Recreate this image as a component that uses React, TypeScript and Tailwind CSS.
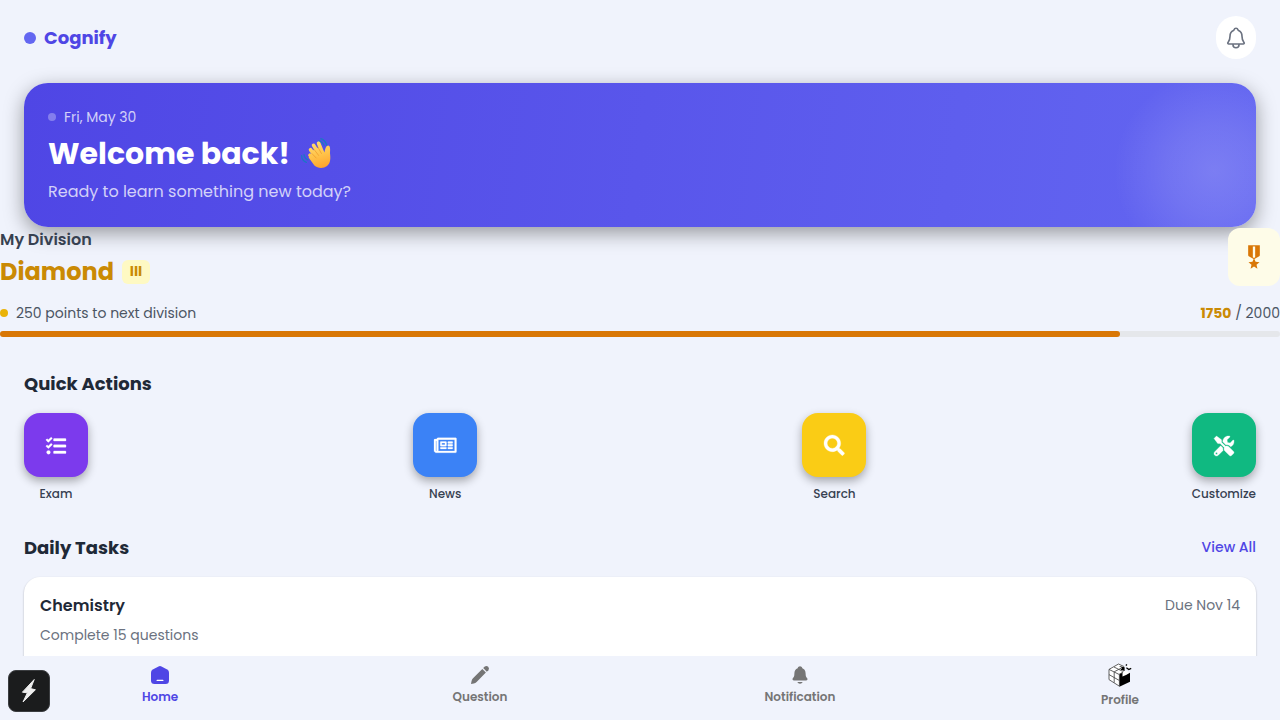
import type { ReactNode } from "react";
import { IoNotificationsOutline, IoNotifications } from "react-icons/io5";
import { MdMilitaryTech } from "react-icons/md";
import { FaTasks, FaRegNewspaper, FaSearch, FaTools } from "react-icons/fa";

function Action({ label, tile, children }: { label: string; tile: string; children: ReactNode }) {
  return (
    <div className="flex min-w-16 flex-col items-center">
      <div
        className={`flex h-16 w-16 items-center justify-center rounded-2xl pt-px text-white shadow-[0_4px_10px_rgba(0,0,0,0.32)] [&_svg]:overflow-visible ${tile}`}
      >
        {children}
      </div>
      <span className="mt-2 whitespace-nowrap text-[12px] leading-[18px] font-medium text-[#374151]">{label}</span>
    </div>
  );
}

function WaveHand() {
  return (
    <svg width="32" height="32" viewBox="0 0 32 32" className="overflow-visible">
      <defs>
        <linearGradient id="hand" gradientUnits="userSpaceOnUse" x1="12" y1="3" x2="20" y2="30">
          <stop offset="0" stopColor="#ffdc73" />
          <stop offset=".55" stopColor="#ffc34a" />
          <stop offset="1" stopColor="#ffa52e" />
        </linearGradient>
      </defs>
      <g fill="none" stroke="url(#hand)" strokeLinecap="round" strokeWidth="3.7">
        <path d="M10 17.2L16 23" />
        <path d="M10.6 11.8L17 20" />
        <path d="M13.6 7.4L20 18" />
        <path d="M18.6 5.2L23 16" />
      </g>
      <path
        d="M10.5 17L13.5 12L20 9L24.4 14.4C25.2 12.4 25.2 8.4 28 7.6C30.6 7.6 30.2 12 30 15.5C30.6 20 30.8 25 27 28C23.4 30.8 17.6 30.4 14.4 27.6L8.6 19.4Z"
        fill="url(#hand)"
      />
      <path d="M12 15.6L16.2 20M14.2 11.6L18.6 17.4M17.8 9L21.4 15.4" stroke="#ec9626" strokeWidth=".7" strokeLinecap="round" fill="none" />
      <path
        d="M20.8 .6Q25.4 2.2 26.8 7M19 2.6Q22.6 3.8 24 7.2M1.6 17.6Q1.6 22.6 6.4 24.4M4 16.6Q4.4 20.4 8 21.8"
        stroke="#1b78c4"
        strokeWidth="1.3"
        strokeLinecap="round"
        fill="none"
      />
    </svg>
  );
}

function HomeIcon() {
  return (
    <svg width="20" height="20" viewBox="0 0 20 20">
      <path d="M8.5 1.5Q10 .7 11.5 1.5L17.2 4.6Q19 5.6 19 7.5V15.5Q19 19 15.5 19H4.5Q1 19 1 15.5V7.5Q1 5.6 2.8 4.6Z" fill="currentColor" />
      <path d="M7.2 15.4H12.8" stroke="#fff" strokeWidth="1.4" strokeLinecap="round" />
    </svg>
  );
}

function PencilIcon() {
  return (
    <svg width="20" height="20" viewBox="0 0 20 20" fill="currentColor">
      <path d="M12.3 4L15.9 7.6L6.6 16.9Q5.4 18 3.8 18.4L1 19.1L1.5 16.2Q1.9 14.4 3 13.3Z" />
      <path d="M13.2 3.1L14.8 1.6Q16.5 .3 18.2 1.8Q19.7 3.5 18.4 5.2L16.8 6.7Z" />
    </svg>
  );
}

function CubeIcon() {
  return (
    <svg width="24" height="24" viewBox="0 0 24 24" className="-ml-px">
      <path d="M1 6L10.5 .8L16 3.2V8L21 9.5V18.5L12 23.4L1 17Z" fill="#fff" />
      <path d="M11.4 11.2L14.5 9.4V13.6L18 12L22 9.8V18.8L11.4 23.8Z" fill="#000" />
      <path d="M11 3L16.6 4.2V8L12.5 6.8L14 5Z" fill="#000" />
      <path
        d="M1 6.4L10.5 1L16.2 3.6M1 6.4L11 11.4L15.6 8.8M1 6.4V16.6L11.4 23.2V12M6 4L14.8 8.4M6.2 9V19.6M6.2 8.8L13.6 4.9M1 11.6L11.2 17.4"
        fill="none"
        stroke="#444"
        strokeWidth=".85"
      />
      <path d="M14.8 9.4L18 7.8L20.8 9.2L18 11.4Z" fill="#fff" />
      <path d="M18.6 2.5L21 1.5L23 5.2L20 5.6Z" fill="#fff" />
      <path d="M18.4 4.8L20.8 6.6L23.2 5.4M17.8 2.4L19 1.5" fill="none" stroke="#000" strokeWidth="1.3" />
    </svg>
  );
}

function NavItem({ label, active, children }: { label: string; active?: boolean; children: ReactNode }) {
  return (
    <div className={`flex flex-1 flex-col items-center ${active ? "text-[#4f46e5]" : ""}`}>
      {children}
      <span className="mt-[3px] whitespace-nowrap text-[12px] leading-[18px] font-semibold">{label}</span>
    </div>
  );
}

export default function App() {
  return (
    <div className="relative flex h-[720px] w-[1280px] flex-col overflow-hidden bg-[#f0f3fc] font-['Poppins','Inter','Noto_Sans',sans-serif]">
      <header className="flex h-[83px] shrink-0 items-start justify-between px-6 pt-4">
        <div className="flex h-[43px] items-center gap-2">
          <span className="h-3 w-3 rounded-full bg-[#6366f1]" />
          <span className="text-[18px] leading-7 font-bold text-[#4f46e5]">Cognify</span>
        </div>
        <div className="flex h-[43px] w-10 items-center justify-center rounded-full bg-white text-[#6b7280]">
          <IoNotificationsOutline size={24} className="[&_path]:[stroke-width:35px]" />
        </div>
      </header>

      <section className="mx-6 h-36 shrink-0 rounded-3xl bg-[linear-gradient(98deg,#4f46e5,#6366f1)] shadow-[0_6px_20px_rgba(0,0,0,0.38)]">
        <div className="h-full rounded-3xl bg-[radial-gradient(circle_at_1190px_88px,rgba(255,255,255,0.16)_0,rgba(255,255,255,0.1)_45px,transparent_100px)] px-6 pt-6">
          <div className="flex h-5 items-center gap-2">
            <span className="h-2 w-2 rounded-full bg-white/30" />
            <span className="text-[14px] text-white/75">Fri, May 30</span>
          </div>
          <div className="mt-[9px] flex h-9 items-center gap-2.5">
            <h1 className="text-[30px] leading-9 font-bold text-white">Welcome back!</h1>
            <WaveHand />
          </div>
          <p className="mt-2 text-[16px] leading-6 text-white/75">Ready to learn something new today?</p>
        </div>
      </section>

      <section className="relative shrink-0">
        <div className="flex h-[62px] justify-between">
          <div>
            <h3 className="mt-px text-[16px] leading-6 font-semibold text-[#374151]">My Division</h3>
            <div className="mt-0.5 flex h-9 items-center gap-2">
              <span className="text-[24px] leading-8 font-bold text-[#ca8a04]">Diamond</span>
              <span className="-mt-px flex h-6 w-7 items-center justify-center rounded-md bg-[#fef9c3] text-[14px] font-bold text-[#ca8a04]">III</span>
            </div>
          </div>
          <div className="mt-px flex h-[58px] w-[52px] items-center justify-center rounded-xl bg-[#fefce8] text-[#d97706]">
            <MdMilitaryTech size={28} />
          </div>
        </div>
        <div className="mt-[14px] flex h-5 items-center justify-between text-[14px] text-[#4b5563]">
          <div className="flex items-center gap-2">
            <span className="h-2 w-2 rounded-full bg-[#eab308]" />
            <span>250 points to next division</span>
          </div>
          <span><b className="text-[#ca8a04]">1750</b> / 2000</span>
        </div>
        <div className="mt-2 h-1.5 rounded-full bg-[#e5e7eb]">
          <div className="h-1.5 w-[87.5%] rounded-full bg-[#d97706]" />
        </div>
      </section>

      <section className="mt-[33px] shrink-0 px-6">
        <h2 className="text-[18px] leading-7 font-bold text-[#1f2937]">Quick Actions</h2>
        <div className="mt-[15px] flex justify-between">
          <Action label="Exam" tile="bg-[#7c3aed]"><FaTasks size={20} strokeWidth={8} /></Action>
          <Action label="News" tile="bg-[#3b82f6]"><FaRegNewspaper size={22.5} strokeWidth={6} /></Action>
          <Action label="Search" tile="bg-[#facc15]"><FaSearch size={20.5} strokeWidth={8} /></Action>
          <Action label="Customize" tile="bg-[#10b981]"><FaTools size={20} strokeWidth={8} /></Action>
        </div>
      </section>

      <section className="mt-[30px] flex-1 overflow-hidden px-6">
        <div className="flex h-7 items-center justify-between">
          <h2 className="text-[18px] font-bold text-[#1f2937]">Daily Tasks</h2>
          <span className="text-[14px] font-medium text-[#4f46e5]">View All</span>
        </div>
        <div className="mt-4 h-[120px] rounded-2xl bg-white px-4 pt-4 shadow-[0_1px_2px_rgba(0,0,0,0.3)]">
          <div className="flex h-6 items-center justify-between">
            <span className="mt-px text-[16px] leading-6 font-semibold text-[#1f2937]">Chemistry</span>
            <span className="text-[14px] text-[#6b7280]">Due Nov 14</span>
          </div>
          <p className="mt-2 text-[14px] leading-5 text-[#6b7280]">Complete 15 questions</p>
        </div>
      </section>

      <nav className="flex h-16 shrink-0 bg-[#f0f3fc] text-[#757575]">
        <NavItem label="Home" active><span className="mt-[9px] h-5"><HomeIcon /></span></NavItem>
        <NavItem label="Question"><span className="mt-[9px] h-5"><PencilIcon /></span></NavItem>
        <NavItem label="Notification"><span className="mt-[9px] h-5"><IoNotifications size={20} /></span></NavItem>
        <NavItem label="Profile"><span className="mt-[7px] h-[25px]"><CubeIcon /></span></NavItem>
      </nav>

      <div className="absolute top-[670px] left-2 flex h-[42px] w-[42px] items-center justify-center rounded-lg border border-[#3b3d40] bg-[#1b1c1d]">
        <svg width="16" height="26" viewBox="0 0 16 26">
          <path d="M13.2 1.5L1.4 14.2L6.4 14.8L2 24L14.4 11.8L9.6 10.6Z" fill="#eee" stroke="#eee" strokeWidth="1" strokeLinejoin="round" />
        </svg>
      </div>
    </div>
  );
}
